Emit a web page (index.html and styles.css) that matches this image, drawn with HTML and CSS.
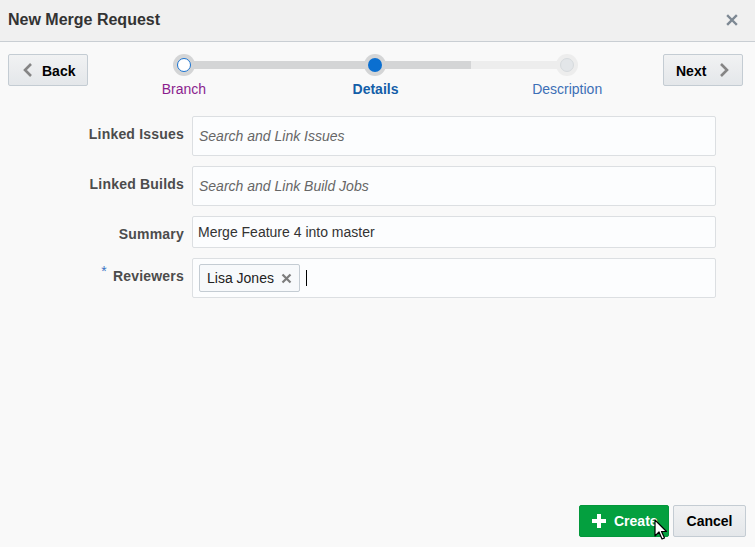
FILE: index.html
```html
<!DOCTYPE html>
<html>
<head>
<meta charset="utf-8">
<link rel="stylesheet" href="styles.css">
</head>
<body>
<div class="dialog">
  <div class="header">
    <div class="title">New Merge Request</div>
    <svg class="close" width="12" height="12" viewBox="0 0 12 12"><path d="M2 2L10 10M10 2L2 10" stroke="#7d8893" stroke-width="2.4" stroke-linecap="square"/></svg>
  </div>
  <div class="nav">
    <button class="btn btn-back">
      <svg width="12" height="16" viewBox="0 0 12 16"><path d="M9 2L3 8L9 14" fill="none" stroke="#858585" stroke-width="2.6"/></svg>
      <span>Back</span>
    </button>
    <div class="train">
      <div class="step visited">
        <div class="ring"><div class="dot"></div></div>
        <div class="label">Branch</div>
      </div>
      <div class="step current">
        <div class="ring"><div class="dot"></div></div>
        <div class="label">Details</div>
      </div>
      <div class="step future">
        <div class="ring"><div class="dot"></div></div>
        <div class="label">Description</div>
      </div>
    </div>
    <button class="btn btn-next">
      <span>Next</span>
      <svg width="12" height="16" viewBox="0 0 12 16"><path d="M3 2L9 8L3 14" fill="none" stroke="#858585" stroke-width="2.6"/></svg>
    </button>
  </div>
  <div class="form">
    <div class="row">
      <div class="flabel">Linked Issues</div>
      <div class="field tall"><span class="ph">Search and Link Issues</span></div>
    </div>
    <div class="row">
      <div class="flabel">Linked Builds</div>
      <div class="field tall"><span class="ph">Search and Link Build Jobs</span></div>
    </div>
    <div class="row">
      <div class="flabel">Summary</div>
      <div class="field short"><span class="val">Merge Feature 4 into master</span></div>
    </div>
    <div class="row">
      <div class="flabel"><span class="req">*</span>Reviewers</div>
      <div class="field tall chips">
        <span class="chip">Lisa Jones<svg width="11" height="11" viewBox="0 0 11 11"><path d="M1.5 1.5L9.5 9.5M9.5 1.5L1.5 9.5" stroke="#7c7c7c" stroke-width="2.2"/></svg></span>
        <span class="caret"></span>
      </div>
    </div>
  </div>
  <div class="footer">
    <button class="btn btn-create">
      <svg width="16" height="16" viewBox="0 0 16 16"><path d="M8 1V15M1 8H15" stroke="#fff" stroke-width="4"/></svg>
      <span>Create</span>
      <svg class="pointer" width="14" height="22" viewBox="0 0 14 22"><path d="M1 1L1 17L5 13L8 20L10.5 19L7.5 12.5L12.5 12.5Z" fill="#fff" stroke="#000" stroke-width="1.2" stroke-linejoin="round"/></svg>
    </button>
    <button class="btn btn-cancel">Cancel</button>
  </div>
</div>
</body>
</html>
```

FILE: styles.css
```css
* { box-sizing: border-box; }
html, body { margin: 0; padding: 0; }
body {
  font-family: "Liberation Sans", Arial, sans-serif;
  background: #f9f9f9;
  color: #333;
}
.dialog {
  width: 755px;
  height: 547px;
  display: flex;
  flex-direction: column;
  background: #f9f9f9;
}
.header {
  height: 42px;
  background: #f0f0f0;
  border-bottom: 1px solid #c9ced3;
  display: flex;
  align-items: center;
  justify-content: space-between;
  padding: 0 17px 2px 8px;
  flex: none;
}
.title {
  font-size: 16px;
  font-weight: bold;
  color: #333;
}
.close { display: block; }

.btn {
  font-family: "Liberation Sans", Arial, sans-serif;
  font-size: 14px;
  font-weight: bold;
  color: #000;
  height: 32px;
  border: 1px solid #c4ccd3;
  border-radius: 2px;
  background: linear-gradient(#f1f2f3, #e4e7ea);
  display: flex;
  align-items: center;
  padding: 0;
  cursor: pointer;
}
.nav {
  display: flex;
  align-items: flex-start;
  padding: 12px 12px 0 8px;
  flex: none;
}
.btn-back {
  width: 80px;
  padding-left: 13px;
  gap: 8px;
}
.btn-next {
  width: 80px;
  padding-left: 12px;
  gap: 12px;
}
.btn-back span, .btn-next span { padding-top: 1px; }
.train {
  flex: 1;
  display: grid;
  grid-template-columns: 1fr 1fr 1fr;
  position: relative;
}
.train::before {
  content: "";
  position: absolute;
  top: 7px;
  height: 8px;
  left: 16.67%;
  right: 16.67%;
  background: linear-gradient(to right, #d4d5d6 0, #d4d5d6 75%, #ededed 75%, #ededed 100%);
}
.step {
  display: flex;
  flex-direction: column;
  align-items: center;
  position: relative;
}
.ring {
  width: 22px;
  height: 22px;
  border-radius: 50%;
  background: #d4d5d6;
  display: flex;
  align-items: center;
  justify-content: center;
}
.dot {
  width: 14px;
  height: 14px;
  border-radius: 50%;
}
.visited .dot { background: #fff; border: 1.5px solid #1a73d0; }
.current .dot { background: #0b6fd0; }
.future .ring { background: #ededed; }
.future .dot { background: #e3e6e9; border: 1px solid #d6dadd; }
.label {
  font-size: 14px;
  margin-top: 5px;
  line-height: 16px;
}
.visited .label { color: #8b1e8e; }
.current .label { color: #145ea8; font-weight: bold; }
.future .label { color: #3d6fb6; }

.form {
  display: flex;
  flex-direction: column;
  gap: 10px;
  padding-top: 19px;
  flex: 1;
}
.row {
  display: flex;
  align-items: flex-start;
  gap: 8px;
}
.flabel {
  width: 184px;
  text-align: right;
  font-size: 14px;
  font-weight: bold;
  color: #4c4c4c;
  line-height: 16px;
  padding-top: 10px;
  letter-spacing: 0.2px;
}
.req {
  color: #3b73c4;
  font-weight: normal;
  position: relative;
  top: -5px;
  margin-right: 6px;
}
.field {
  width: 524px;
  background: #fcfdfe;
  border: 1px solid #dcdfe2;
  border-radius: 2px;
  display: flex;
  align-items: center;
  padding-left: 6px;
  font-size: 14px;
}
.field.tall { height: 40px; }
.field.short { height: 32px; padding-left: 5px; }
.ph { font-style: italic; color: #666; }
.val { color: #333; }
.chips { gap: 6px; }
.chip {
  height: 28px;
  display: inline-flex;
  align-items: center;
  gap: 7px;
  padding: 0 7px 0 7px;
  border: 1px solid #c4ccd3;
  border-radius: 2px;
  background: #f7f9fb;
  color: #222;
}
.caret {
  width: 1px;
  height: 16px;
  background: #000;
}

.footer {
  display: flex;
  justify-content: flex-end;
  gap: 4px;
  padding: 0 9px 10px 0;
  flex: none;
}
.btn-create {
  width: 90px;
  background: #04a03f;
  border-color: #03973b;
  color: #fff;
  padding-left: 11px;
  gap: 7px;
  position: relative;
}
.pointer {
  position: absolute;
  left: 74px;
  top: 13px;
}
.btn-cancel {
  width: 73px;
  justify-content: center;
}
```
